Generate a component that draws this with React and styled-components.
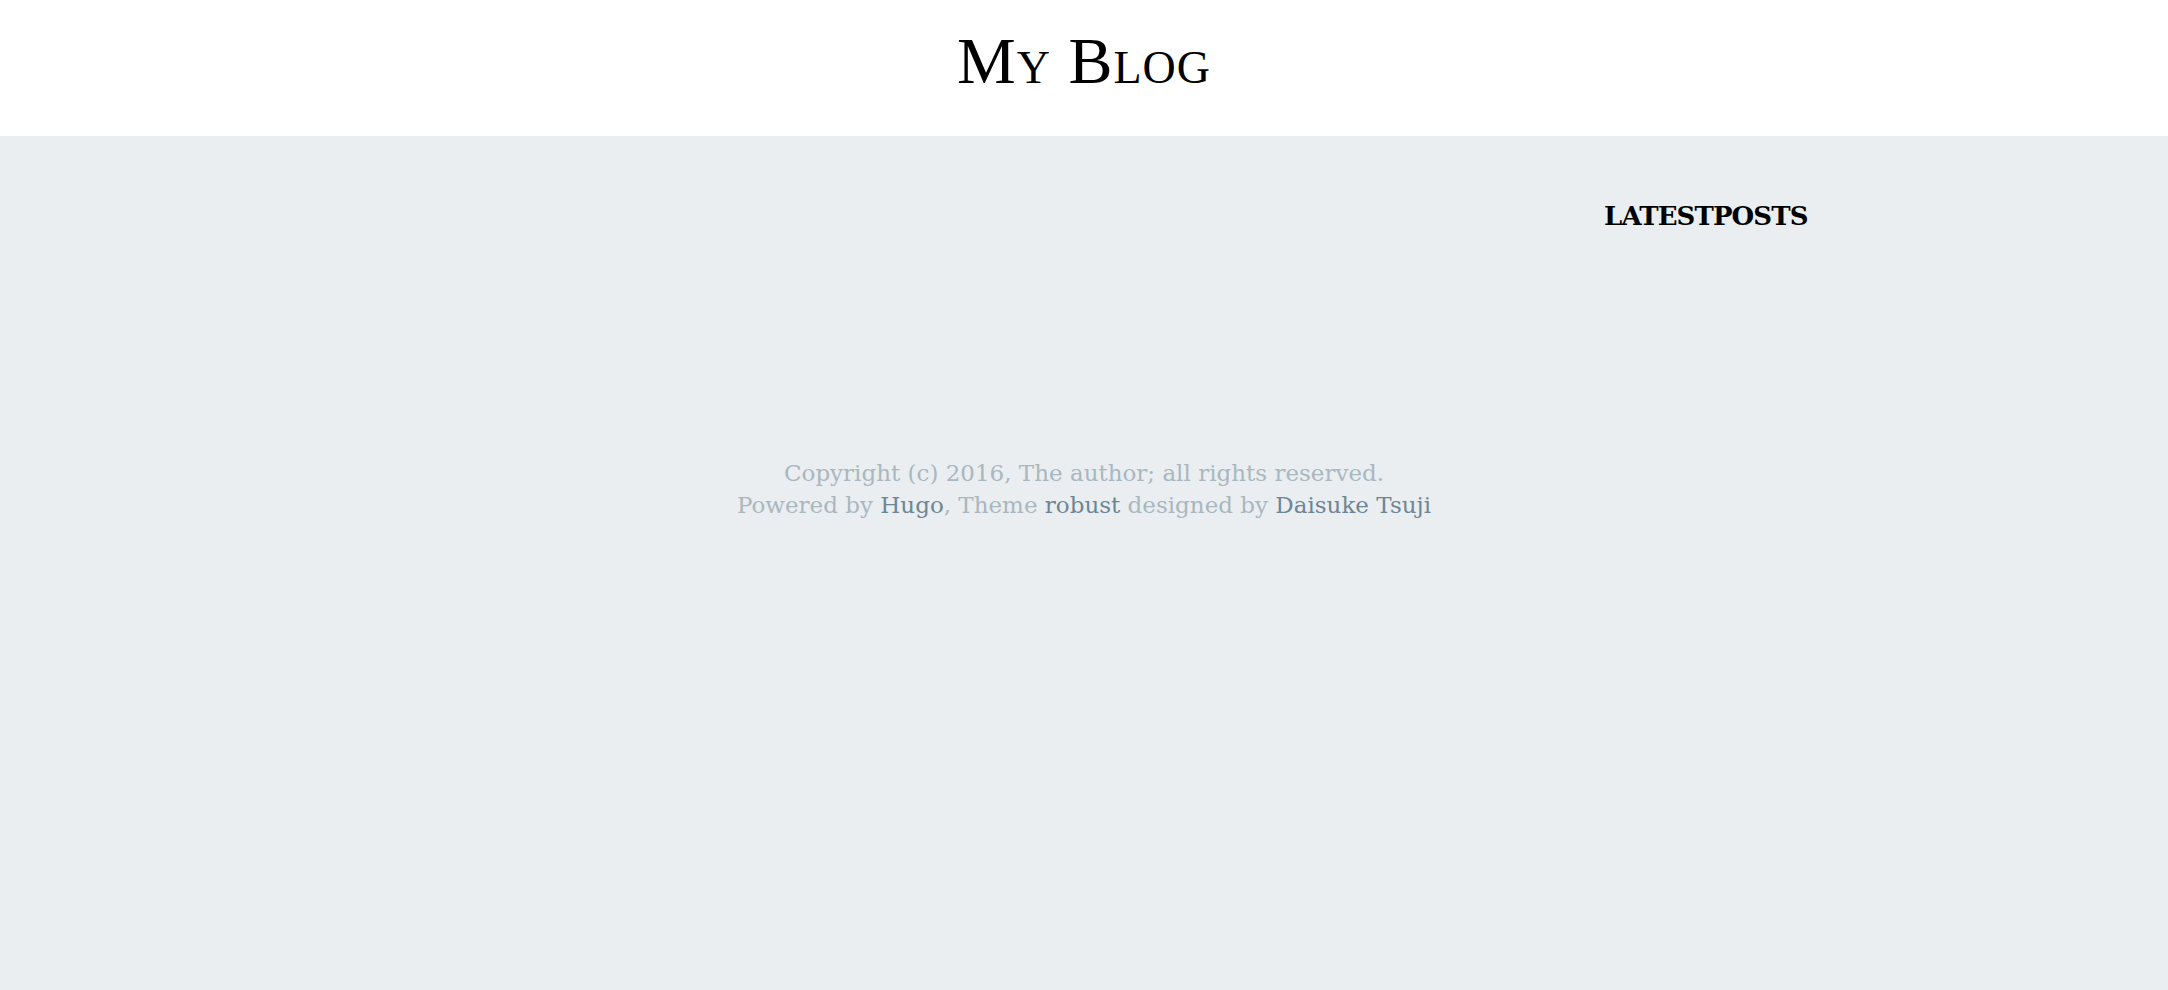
import React from "react";
import styled, { createGlobalStyle } from "styled-components";

const Global = createGlobalStyle`
  html, body { margin: 0; padding: 0; }
  body {
    background: #eaeef1;
    font-family: "DejaVu Serif", serif;
    color: #000;
  }
`;

const Header = styled.header`
  background: #fff;
  height: 136px;
  display: flex;
  align-items: flex-start;
  justify-content: center;
`;

const Title = styled.h1`
  margin: 0;
  padding-top: 25px;
  font-family: "Liberation Serif", serif;
  font-weight: 400;
  font-size: 66px;
  line-height: 72px;
  font-variant: small-caps;
  letter-spacing: 1px;
`;

const Layout = styled.div`
  width: 1600px;
  min-height: 321px;
  margin: 0 auto;
  display: grid;
  grid-template-columns: 1fr 280px;
`;

const Main = styled.main``;

const Sidebar = styled.aside`
  padding-top: 64px;
`;

const SideHeading = styled.h2`
  margin: 0;
  font-family: "DejaVu Serif", serif;
  font-weight: 700;
  font-size: 26px;
  line-height: 32px;
  letter-spacing: -0.9px;
`;

const Footer = styled.footer`
  text-align: center;
  font-family: "DejaVu Serif", serif;
  font-size: 23px;
  line-height: 32px;
  color: #a9b7bf;
`;

const Line = styled.div``;

const Link = styled.a`
  color: #6d8695;
  text-decoration: none;
`;

export default function App() {
  return (
    <>
      <Global />
      <Header>
        <Title>My Blog</Title>
      </Header>
      <Layout>
        <Main />
        <Sidebar>
          <SideHeading>LATESTPOSTS</SideHeading>
        </Sidebar>
      </Layout>
      <Footer>
        <Line>Copyright (c) 2016, The author; all rights reserved.</Line>
        <Line>
          Powered by <Link href="#">Hugo</Link>, Theme <Link href="#">robust</Link> designed by{" "}
          <Link href="#">Daisuke Tsuji</Link>
        </Line>
      </Footer>
    </>
  );
}
